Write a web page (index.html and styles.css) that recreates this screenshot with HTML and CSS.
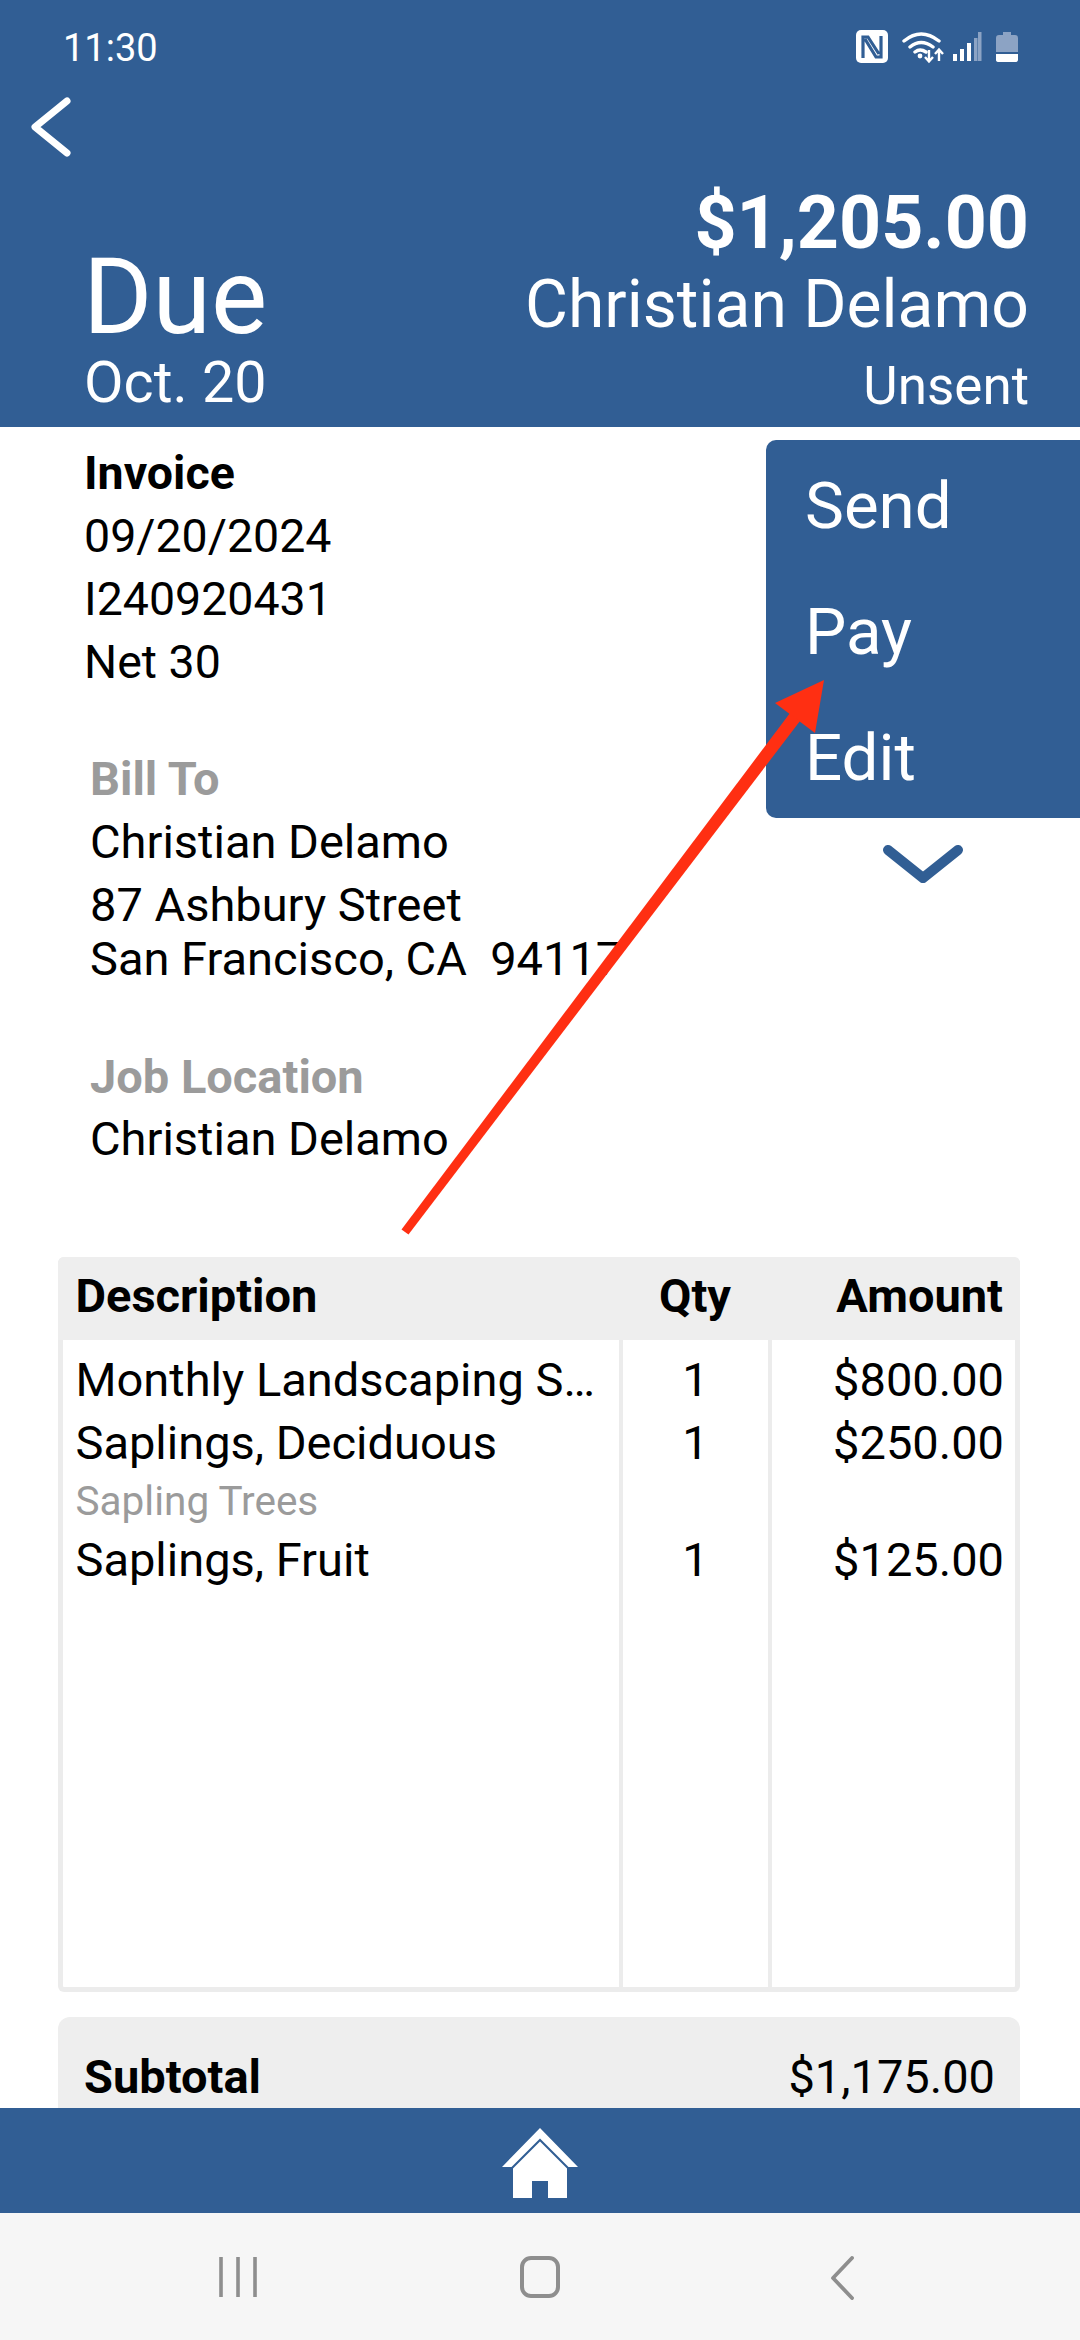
FILE: index.html
```html
<!DOCTYPE html>
<html lang="en">
<head>
<meta charset="utf-8">
<title>Invoice</title>
<link rel="stylesheet" href="styles.css">
</head>
<body>
<div class="screen">
  <header class="header">
    <div class="status">
      <span class="time">11:30</span>
      <svg class="status-icons" viewBox="856 28 164 38" width="164" height="38">
        <rect x="856" y="30" width="32" height="33" rx="5" fill="#fff"/>
        <path d="M863 58V37h5l11 17M881 36v21h-5L865 39" fill="none" stroke="#315e94" stroke-width="3.200"/>
        <path d="M904 41q17-14 35 0M910 47q11-9 23 0M915 52q5-4 11 0" fill="none" stroke="#fff" stroke-width="3.400" stroke-linecap="round"/>
        <circle cx="920" cy="56" r="2.400" fill="#fff"/>
        <path d="M929 50v11M925 57l4 4.500 4-4.500M939 61V50M935 54l4-4.500 4 4.500" fill="none" stroke="#fff" stroke-width="2.400"/>
        <rect x="953" y="54" width="4" height="7" fill="#fff"/>
        <rect x="960" y="49" width="4" height="12" fill="#fff"/>
        <rect x="967" y="43" width="4" height="18" fill="#fff"/>
        <rect x="974" y="38" width="3.500" height="23" fill="#8ca3c4"/>
        <rect x="978" y="32" width="3.500" height="29" fill="#8ca3c4"/>
        <path d="M1003 32h8v3h4q3 0 3 3v14h-22V38q0-3 3-3h4z" fill="#8ca3c4"/>
        <path d="M996 54h22v6q0 2-3 2h-16q-3 0-3-2z" fill="#fff"/>
      </svg>
    </div>
    <button class="back" aria-label="Back">
      <svg viewBox="0 0 43 60" width="43" height="60">
        <path d="M38 4 6 30l32 26" fill="none" stroke="#fff" stroke-width="7" stroke-linecap="round" stroke-linejoin="round"/>
      </svg>
    </button>
    <div class="summary">
      <div class="due">
        <div class="due-label">Due</div>
        <div class="due-date">Oct. 20</div>
      </div>
      <div class="totals">
        <div class="total">$1,205.00</div>
        <div class="client">Christian Delamo</div>
        <div class="state">Unsent</div>
      </div>
    </div>
  </header>

  <main class="main">
    <section class="invoice">
      <div class="line strong">Invoice</div>
      <div class="line">09/20/2024</div>
      <div class="line">I240920431</div>
      <div class="line">Net 30</div>
    </section>

    <section class="party bill">
      <div class="line muted">Bill To</div>
      <div class="line">Christian Delamo</div>
      <div class="addr addr-first">87 Ashbury Street</div>
      <div class="addr pre">San Francisco, CA  94117</div>
    </section>

    <section class="party job">
      <div class="line muted">Job Location</div>
      <div class="line job-name">Christian Delamo</div>
    </section>

    <section class="table">
      <div class="thead">
        <div class="th desc-col">Description</div>
        <div class="th qty-col">Qty</div>
        <div class="th amt-col">Amount</div>
      </div>
      <div class="tbody">
        <div class="col desc-col">
          <div class="cell ellipsis">Monthly Landscaping Services</div>
          <div class="cell">Saplings, Deciduous</div>
          <div class="cell sub">Sapling Trees</div>
          <div class="cell">Saplings, Fruit</div>
        </div>
        <div class="col qty-col">
          <div class="cell">1</div>
          <div class="cell">1</div>
          <div class="cell sub"></div>
          <div class="cell">1</div>
        </div>
        <div class="col amt-col">
          <div class="cell">$800.00</div>
          <div class="cell">$250.00</div>
          <div class="cell sub"></div>
          <div class="cell">$125.00</div>
        </div>
      </div>
    </section>

    <section class="totals-panel">
      <span class="strong">Subtotal</span>
      <span>$1,175.00</span>
    </section>

    <aside class="actions">
      <nav class="menu">
        <div class="menu-item">Send</div>
        <div class="menu-item">Pay</div>
        <div class="menu-item">Edit</div>
      </nav>
      <svg class="chevron" viewBox="0 0 80 38" width="80" height="38">
        <path d="M5 5l35 28L75 5" fill="none" stroke="#315e94" stroke-width="10" stroke-linecap="round" stroke-linejoin="round"/>
      </svg>
    </aside>
  </main>

  <footer class="tabbar">
    <svg viewBox="0 0 76 70" width="76" height="70">
      <path d="M38 0 76 39H65v31H46V53H30v17H11V39H0z" fill="#fff"/>
      <path d="M9 41 38 12l29 29" fill="none" stroke="#315e94" stroke-width="2"/>
    </svg>
  </footer>
  <div class="navbar">
    <svg viewBox="0 0 40 42" width="40" height="42">
      <path d="M3 1v40M20 1v40M37 1v40" fill="none" stroke="#8e8e8e" stroke-width="3.600"/>
    </svg>
    <svg viewBox="0 0 40 42" width="40" height="42">
      <rect x="2" y="2" width="36" height="38" rx="9" fill="none" stroke="#8e8e8e" stroke-width="4"/>
    </svg>
    <svg viewBox="0 0 24 44" width="24" height="44">
      <path d="M22 2 3 22l19 20" fill="none" stroke="#8e8e8e" stroke-width="3.800" stroke-linecap="round" stroke-linejoin="round"/>
    </svg>
  </div>

  <svg class="arrow" viewBox="0 0 1080 2340" width="1080" height="2340" aria-hidden="true">
    <path d="M401.500 1229.500 408.500 1234.500 800 721 790 713z" fill="#ff2f12"/>
    <path d="M824 680 775 703 815 733z" fill="#ff2f12"/>
  </svg>
</div>
</body>
</html>
```

FILE: styles.css
```css
* { box-sizing: border-box; }

html, body {
  margin: 0;
  padding: 0;
  background: #fff;
}

body {
  font-family: Roboto, "Liberation Sans", sans-serif;
  color: #000;
}

.screen {
  position: relative;
  width: 1080px;
  height: 2340px;
  display: flex;
  flex-direction: column;
  overflow: hidden;
}

/* Header */
.header {
  height: 427px;
  flex: none;
  display: flex;
  flex-direction: column;
  background: #315e94;
  color: #fff;
}

.status {
  height: 90px;
  flex: none;
  display: flex;
  justify-content: space-between;
  padding: 26px 60px 0 63px;
}

.time {
  font-size: 38px;
  line-height: 44px;
}

.status-icons {
  margin-top: 2px;
}

.back {
  align-self: flex-start;
  display: block;
  width: 43px;
  height: 60px;
  margin: 7px 0 0 29px;
  padding: 0;
  border: 0;
  background: none;
}

.back svg { display: block; }

.summary {
  margin-top: auto;
  display: flex;
  justify-content: space-between;
  align-items: flex-end;
  padding: 0 51px 0 84px;
}

.due-label { font-size: 106px; line-height: 81px; margin-left: -1px; }
.due-date  { font-size: 57.500px; line-height: 89px; }

.totals { text-align: right; }
.total  { font-size: 73.500px; line-height: 83px; font-weight: 700; }
.client { font-size: 66px; line-height: 80px; }
.state  { font-size: 53px; line-height: 82px; }

/* Body */
.main {
  position: relative;
  flex: 1;
  min-height: 0;
  overflow: hidden;
  font-size: 47px;
}

.line { line-height: 63px; }
.addr { line-height: 54px; }
.addr-first { margin-top: 5px; }
.pre  { white-space: pre; }
.strong { font-weight: 700; }
.muted { font-weight: 700; color: #9b9b9b; }

.invoice { margin: 15px 0 0 84px; font-size: 46.500px; }
.party   { margin-left: 90px; }
.bill    { margin-top: 53px; }
.job     { margin-top: 58.500px; }
.job-name { margin-top: -1px; }

/* Table */
.table {
  margin: 87.500px 60px 0 58px;
  width: 962px;
  height: 735px;
  display: flex;
  flex-direction: column;
  border: 5px solid #ececec;
  border-top: 0;
  border-radius: 6px;
}

.thead {
  height: 83px;
  flex: none;
  display: flex;
  margin: 0 -5px;
  padding: 0 5px;
  background: #eee;
  border-radius: 6px 6px 0 0;
}

.th {
  font-size: 47px;
  font-weight: 700;
  line-height: 78px;
}

.tbody {
  flex: 1;
  display: flex;
  min-height: 0;
}

.col { padding-top: 7.500px; }

.desc-col { width: 560px; flex: none; }
.qty-col  { width: 149px; flex: none; text-align: center; }
.amt-col  { flex: 1; text-align: right; }

.col.desc-col { padding-left: 12.500px; padding-right: 14px; border-right: 4px solid #ececec; }
.col.qty-col  { border-right: 4px solid #ececec; }
.col.amt-col  { padding-right: 11px; }

.th.desc-col { padding-left: 12.500px; }
.th.qty-col  { padding-right: 5px; }
.th.amt-col  { padding-right: 12px; }

.cell { height: 63px; line-height: 63px; }

.cell.sub {
  height: 54px;
  line-height: 54px;
  font-size: 40.500px;
  color: #9b9b9b;
}

.ellipsis {
  white-space: nowrap;
  overflow: hidden;
  text-overflow: ellipsis;
}

/* Totals */
.totals-panel {
  margin: 25px 60px 0 58px;
  width: 962px;
  height: 160px;
  display: flex;
  justify-content: space-between;
  padding: 28px 25px 0 26px;
  line-height: 63px;
  background: #eee;
  border-radius: 12px;
}

/* Actions popover */
.actions {
  position: absolute;
  top: 13px;
  right: 0;
  width: 314px;
}

.menu {
  height: 378px;
  padding-top: 3px;
  background: #315e94;
  border-radius: 10px 0 0 10px;
  color: #fff;
}

.menu-item {
  height: 126px;
  padding-left: 39px;
  font-size: 65.500px;
  line-height: 126px;
}

.chevron {
  display: block;
  margin: 27px 0 0 117px;
}

/* Bottom bars */
.tabbar {
  height: 105px;
  flex: none;
  display: flex;
  justify-content: center;
  padding-top: 20px;
  background: #315e94;
}

.tabbar svg { display: block; }

.navbar {
  height: 127px;
  flex: none;
  display: grid;
  grid-template-columns: repeat(3, 302px);
  justify-content: center;
  justify-items: center;
  padding-top: 43px;
  align-items: start;
  background: #f6f6f6;
}

.navbar svg { display: block; }

/* Annotation */
.arrow {
  position: absolute;
  top: 0;
  left: 0;
  pointer-events: none;
}
```
